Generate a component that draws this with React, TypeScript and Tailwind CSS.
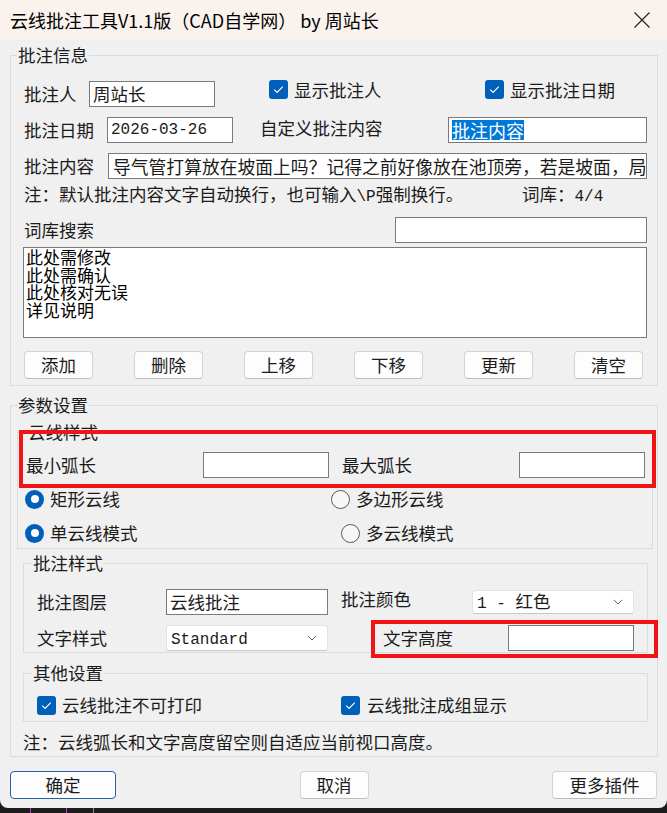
import React from "react";

const M = ({ children }: { children: React.ReactNode }) => (
  <span className="font-['Liberation_Mono',monospace] text-[16px]">{children}</span>
);

function Check() {
  return (
    <span className="w-[19px] h-[19px] rounded-[3px] bg-[#005fb8] flex items-center justify-center shrink-0">
      <svg width="11" height="9" viewBox="0 0 11 9">
        <path d="M1.2 4.6 L4.1 7.4 L9.8 1.6" fill="none" stroke="white" strokeWidth="1.2" />
      </svg>
    </span>
  );
}

function Radio({ on }: { on: boolean }) {
  return on ? (
    <span className="w-[19px] h-[19px] rounded-full bg-[#005fb8] flex items-center justify-center shrink-0">
      <span className="w-[8px] h-[8px] rounded-full bg-white" />
    </span>
  ) : (
    <span className="w-[19px] h-[19px] rounded-full border border-[#5c5c5c] bg-[#f7f7f7] shrink-0" />
  );
}

function Box({ className = "", children }: { className?: string; children?: React.ReactNode }) {
  return (
    <div
      className={
        "h-[26px] border border-[#7a7a7a] bg-white flex items-center px-[3px] overflow-hidden whitespace-nowrap shrink-0 " +
        className
      }
    >
      {children}
    </div>
  );
}

function Select({ className = "", children }: { className?: string; children?: React.ReactNode }) {
  return (
    <div
      className={
        "border border-[#e3e3e3] border-b-[#c8c8c8] rounded-[3px] bg-white flex items-center justify-between pl-[4px] pr-[10px] shrink-0 " +
        className
      }
    >
      <span className="leading-none">{children}</span>
      <svg width="10" height="6" viewBox="0 0 10 6">
        <path d="M0.8 0.8 L5 5 L9.2 0.8" fill="none" stroke="#6a6a6a" strokeWidth="1" />
      </svg>
    </div>
  );
}

function Btn({ className = "", children }: { className?: string; children: React.ReactNode }) {
  return (
    <div
      className={
        "h-[28px] border rounded-[4px] bg-[#fdfdfd] flex items-center justify-center leading-none shrink-0 " +
        className
      }
    >
      {children}
    </div>
  );
}

export default function App() {
  return (
    <div className="w-[667px] h-[813px] bg-[#1c1c1c] relative overflow-hidden font-['Noto_Sans_CJK_SC',sans-serif] text-[17.5px] text-[#1b1b1b]">
      <div className="h-[808px] bg-[#f0f0f0] rounded-b-[8px] flex flex-col">
        {/* title bar */}
        <div className="h-[40px] shrink-0 bg-[#faf2ed] flex items-center justify-between pl-[10px] pr-[16px]">
          <span className="text-[18px] leading-none text-black">云线批注工具V1.1版（CAD自学网） by 周站长</span>
          <svg width="18" height="18" viewBox="0 0 18 18">
            <path d="M1.5 1.5 L16.5 16.5 M16.5 1.5 L1.5 16.5" stroke="#222" strokeWidth="1.2" />
          </svg>
        </div>

        {/* group 1 */}
        <fieldset className="ml-[10px] mt-[5px] w-[648px] border border-[#dcdcdc] p-0 min-w-0">
          <legend className="ml-[6px] px-[1px] h-[20px] leading-[20px]">批注信息</legend>
          <div className="pl-[13px] pr-[10px] pb-[6px] flex flex-col">
            <div className="mt-[16px] h-[26px] flex items-center">
              <span className="w-[65px] leading-none">批注人</span>
              <Box className="w-[126px]">周站长</Box>
              <div className="ml-[54px] w-[216px] self-start -mt-[1px] h-[19px] flex items-center gap-[6px]">
                <Check />
                <span className="leading-none">显示批注人</span>
              </div>
              <div className="self-start -mt-[1px] h-[19px] flex items-center gap-[6px]">
                <Check />
                <span className="leading-none">显示批注日期</span>
              </div>
            </div>
            <div className="mt-[10px] h-[26px] flex items-center">
              <span className="w-[83px] leading-none">批注日期</span>
              <Box className="w-[126px]">
                <M>2026-03-26</M>
              </Box>
              <span className="ml-[27px] w-[188px] leading-none -mt-[4px]">自定义批注内容</span>
              <Box className="w-[199px]">
                <span className="bg-[#0078d7] text-white text-[18px] leading-[20px]">批注内容</span>
              </Box>
            </div>
            <div className="mt-[10px] h-[26px] flex items-center">
              <span className="w-[84px] leading-none">批注内容</span>
              <Box className="w-[539px] pl-[4px]">
                <span className="text-[17.8px]">导气管打算放在坡面上吗？记得之前好像放在池顶旁，若是坡面，局</span>
              </Box>
            </div>
            <div className="mt-[3px] h-[26px] flex items-center whitespace-nowrap">
              <span className="w-[498px] leading-none">
                注：默认批注内容文字自动换行，也可输入<M>\P</M>强制换行。
              </span>
              <span className="leading-none">
                词库：<M>4/4</M>
              </span>
            </div>
            <div className="mt-[9px] h-[26px] flex items-center justify-between">
              <span className="leading-none">词库搜索</span>
              <Box className="w-[252px]" />
            </div>
            <div className="mt-[4px] -ml-[1px] h-[91px] w-[624px] border border-[#7a7a7a] bg-white pl-[2px] text-[17px] leading-[17.7px] text-black">
              <div className="h-[17.7px]">此处需修改</div>
              <div className="h-[17.7px]">此处需确认</div>
              <div className="h-[17.7px]">此处核对无误</div>
              <div className="h-[17.7px]">详见说明</div>
            </div>
            <div className="mt-[13px] flex gap-[41px]">
              {["添加", "删除", "上移", "下移", "更新", "清空"].map((t) => (
                <Btn key={t} className="w-[69px] border-[#d3d3d3] border-b-[#bdbdbd]">
                  {t}
                </Btn>
              ))}
            </div>
          </div>
        </fieldset>

        {/* group 2 */}
        <fieldset className="ml-[10px] mt-[9px] w-[648px] border border-[#dcdcdc] p-0 min-w-0">
          <legend className="ml-[6px] px-[1px] h-[20px] leading-[20px]">参数设置</legend>
          <div className="pb-[1px] flex flex-col">
            {/* 云线样式 */}
            <fieldset className="ml-[6px] mt-[7px] w-[636px] border border-[#dcdcdc] p-0 min-w-0">
              <legend className="ml-[9px] px-[1px] h-[20px] leading-[20px]">云线样式</legend>
              <div className="pb-[3px] flex flex-col">
                <div className="mt-[10px] h-[26px] flex items-center pl-[8px]">
                  <span className="w-[177px] leading-none">最小弧长</span>
                  <Box className="w-[126px]" />
                  <span className="ml-[13px] w-[177px] leading-none">最大弧长</span>
                  <Box className="w-[126px]" />
                </div>
                <div className="mt-[9px] h-[24px] flex items-center pl-[7px]">
                  <div className="w-[306px] flex items-center gap-[6px]">
                    <Radio on />
                    <span className="leading-none">矩形云线</span>
                  </div>
                  <div className="flex items-center gap-[6px]">
                    <Radio on={false} />
                    <span className="leading-none">多边形云线</span>
                  </div>
                </div>
                <div className="mt-[10px] h-[24px] flex items-center pl-[7px]">
                  <div className="w-[316px] flex items-center gap-[6px]">
                    <Radio on />
                    <span className="leading-none">单云线模式</span>
                  </div>
                  <div className="flex items-center gap-[6px]">
                    <Radio on={false} />
                    <span className="leading-none">多云线模式</span>
                  </div>
                </div>
              </div>
            </fieldset>

            {/* 批注样式 */}
            <fieldset className="ml-[12px] mt-[4px] w-[625px] border border-[#dcdcdc] p-0 min-w-0">
              <legend className="ml-[8px] px-[1px] h-[20px] leading-[20px]">批注样式</legend>
              <div className="pb-[1px] pl-[13px] flex flex-col">
                <div className="mt-[16px] h-[26px] flex items-center">
                  <span className="w-[129px] leading-none">批注图层</span>
                  <Box className="w-[162px]">云线批注</Box>
                  <span className="ml-[13px] w-[131px] leading-none -mt-[6px]">批注颜色</span>
                  <Select className="w-[162px] h-[24px]">
                    <M>1 - </M>红色
                  </Select>
                </div>
                <div className="mt-[10px] h-[26px] flex items-center">
                  <span className="w-[129px] leading-none">文字样式</span>
                  <Select className="w-[162px] h-[26px]">
                    <M>Standard</M>
                  </Select>
                  <span className="ml-[55px] w-[125px] leading-none">文字高度</span>
                  <Box className="w-[126px]" />
                </div>
              </div>
            </fieldset>

            {/* 其他设置 */}
            <fieldset className="ml-[12px] mt-[10px] w-[625px] border border-[#dcdcdc] p-0 min-w-0">
              <legend className="ml-[8px] px-[1px] h-[20px] leading-[20px]">其他设置</legend>
              <div className="pb-[5px] pl-[13px] flex flex-col">
                <div className="mt-[11px] h-[22px] flex items-center">
                  <div className="w-[304px] flex items-center gap-[6px]">
                    <Check />
                    <span className="leading-none">云线批注不可打印</span>
                  </div>
                  <div className="flex items-center gap-[7px]">
                    <Check />
                    <span className="leading-none">云线批注成组显示</span>
                  </div>
                </div>
              </div>
            </fieldset>

            <div className="mt-[7px] h-[26px] ml-[12px] flex items-center">
              <span className="leading-none">注：云线弧长和文字高度留空则自适应当前视口高度。</span>
            </div>
          </div>
        </fieldset>

        {/* bottom buttons */}
        <div className="mt-[14px] px-[10px] flex justify-between">
          <Btn className="w-[106px] border-[#2163a8]">确定</Btn>
          <Btn className="w-[69px] border-[#d3d3d3] border-b-[#bdbdbd]">取消</Btn>
          <Btn className="w-[105px] border-[#d3d3d3] border-b-[#bdbdbd]">更多插件</Btn>
        </div>
      </div>

      {/* annotation red boxes */}
      <div className="absolute left-[19px] top-[430px] w-[637px] h-[58px] border-[4px] border-[#f01414]" />
      <div className="absolute left-[371px] top-[620px] w-[287px] h-[38px] border-[4px] border-[#f01414]" />

      {/* taskbar bits */}
      <div className="absolute left-[30px] bottom-0 w-[1px] h-[5px] bg-[#c040c0]" />
      <div className="absolute left-[66px] bottom-0 w-[1px] h-[5px] bg-[#c040c0]" />
      <div className="absolute left-[93px] bottom-0 w-[1px] h-[5px] bg-[#8a8a8a]" />
    </div>
  );
}
